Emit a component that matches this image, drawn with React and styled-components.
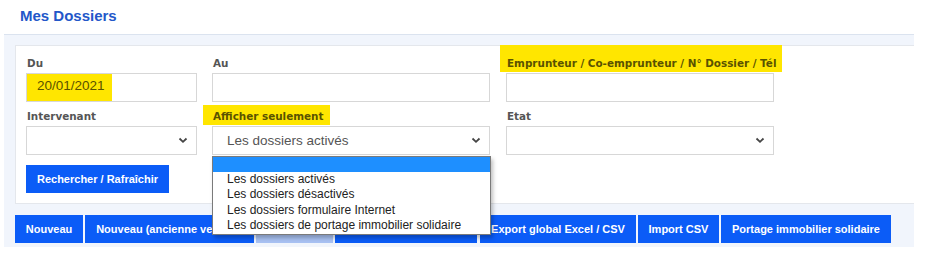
import React from "react";
import styled, { createGlobalStyle } from "styled-components";

const GlobalStyle = createGlobalStyle`
  body {
    margin: 0;
    background: #fff;
    font-family: "Liberation Sans", Arial, sans-serif;
  }
`;

const Page = styled.div`
  width: 932px;
  height: 263px;
  position: relative;
  overflow: hidden;
`;

const Title = styled.h1`
  margin: 0;
  height: 34px;
  padding: 7px 0 0 20px;
  box-sizing: border-box;
  font-size: 15px;
  font-weight: bold;
  color: #2357c9;
`;

const Panel = styled.div`
  margin-left: 4px;
  width: 910px;
  background: #f1f5fc;
  border-top: 1px solid #dbe3ef;
  padding: 10px 0 2px 11px;
  box-sizing: border-box;
`;

const Card = styled.div`
  background: #fff;
  border: 1px solid #e4e7ec;
  border-right: none;
  height: 159px;
  box-sizing: border-box;
  padding: 10px 0 0 10px;
`;

const Grid = styled.div`
  display: grid;
  grid-template-columns: 171px 278px 269px;
  column-gap: 15px;
  row-gap: 7px;
  & > :nth-child(3n) {
    margin-left: 1px;
  }
`;

const Field = styled.div`
  display: flex;
  flex-direction: column;
`;

const Label = styled.label`
  font-family: "DejaVu Sans", Verdana, sans-serif;
  font-size: 10.4px;
  font-weight: bold;
  color: #555;
  line-height: 14px;
  margin-bottom: 3px;
  padding-left: 1px;
  white-space: nowrap;
`;

const Mark = styled.span`
  background: #ffe600;
  color: #5a5200;
  padding: ${(p) => p.pad};
  margin: ${(p) => p.mar};
`;

const Input = styled.div`
  height: 29px;
  box-sizing: border-box;
  border: 1px solid #d7d7d7;
  background: #fff;
  font-size: 13.5px;
  color: #555;
  display: flex;
  align-items: center;
  padding-left: 2px;
`;

const Select = styled(Input)`
  justify-content: space-between;
  padding: 0 8px 0 14px;
`;

const Chevron = () => (
  <svg width="10" height="7" viewBox="0 0 10 7">
    <path d="M1.5 1.5 L5 4.8 L8.5 1.5" fill="none" stroke="#444" strokeWidth="1.8" />
  </svg>
);

const SearchButton = styled.button`
  margin-top: 10px;
  width: 143px;
  height: 28px;
  border: none;
  background: #0b5cf7;
  color: #fff;
  font-family: "Liberation Sans", Arial, sans-serif;
  font-size: 11px;
  font-weight: bold;
  padding: 0;
`;

const ButtonBar = styled.div`
  display: flex;
  gap: 2px;
  padding-top: 11px;
  height: 41px;
  box-sizing: border-box;
`;

const ActionButton = styled.button`
  width: ${(p) => p.w}px;
  height: 28px;
  flex: none;
  border: none;
  padding: 0;
  margin-left: ${(p) => p.ml || 0}px;
  background: ${(p) => (p.disabled ? "#a9c2f3" : "#0b5cf7")};
  color: #fff;
  font-family: "Liberation Sans", Arial, sans-serif;
  font-size: 11px;
  font-weight: bold;
  white-space: nowrap;
  overflow: hidden;
`;

const Listbox = styled.ul`
  position: absolute;
  left: 212px;
  top: 156px;
  width: 279px;
  margin: 0;
  padding: 0 0 1px;
  list-style: none;
  background: #fff;
  border: 1px solid #7a7a7a;
  box-sizing: border-box;
  box-shadow: 2px 3px 4px rgba(0, 0, 0, 0.25);
`;

const Option = styled.li`
  height: 15.2px;
  line-height: 15px;
  padding-left: 14px;
  font-size: 12px;
  color: #222;
  background: ${(p) => (p.selected ? "#1e8fff" : "transparent")};
`;

const options = [
  "",
  "Les dossiers activés",
  "Les dossiers désactivés",
  "Les dossiers formulaire Internet",
  "Les dossiers de portage immobilier solidaire",
];

const actions = [
  { label: "Nouveau", w: 68 },
  { label: "Nouveau (ancienne version)", w: 169 },
  { label: "Supprimer", w: 77, disabled: true },
  { label: "Export Excel / CSV", w: 142 },
  { label: "Export global Excel / CSV", w: 156, ml: 1 },
  { label: "Import CSV", w: 81 },
  { label: "Portage immobilier solidaire", w: 170 },
];

export default function App() {
  return (
    <Page>
      <GlobalStyle />
      <Title>Mes Dossiers</Title>
      <Panel>
        <Card>
          <Grid>
            <Field>
              <Label>Du</Label>
              <Input>
                <Mark pad="4px 7px 8px 10px" mar="0 0 0 -2px">20/01/2021</Mark>
              </Input>
            </Field>
            <Field>
              <Label>Au</Label>
              <Input />
            </Field>
            <Field>
              <Label>
                <Mark pad="12px 6px 3px 7px" mar="0 0 0 -7px">
                  Emprunteur / Co-emprunteur / N° Dossier / Tél
                </Mark>
              </Label>
              <Input />
            </Field>
            <Field>
              <Label>Intervenant</Label>
              <Select>
                <span />
                <Chevron />
              </Select>
            </Field>
            <Field>
              <Label>
                <Mark pad="5px 7px 3px 10px" mar="0 0 0 -10px">Afficher seulement</Mark>
              </Label>
              <Select>
                <span>Les dossiers activés</span>
                <Chevron />
              </Select>
            </Field>
            <Field>
              <Label>Etat</Label>
              <Select>
                <span />
                <Chevron />
              </Select>
            </Field>
          </Grid>
          <SearchButton>Rechercher / Rafraîchir</SearchButton>
        </Card>
        <ButtonBar>
          {actions.map((a) => (
            <ActionButton key={a.label} w={a.w} ml={a.ml} disabled={a.disabled}>
              {a.label}
            </ActionButton>
          ))}
        </ButtonBar>
      </Panel>
      <Listbox>
        {options.map((o, i) => (
          <Option key={i} selected={i === 0}>
            {o}
          </Option>
        ))}
      </Listbox>
    </Page>
  );
}
